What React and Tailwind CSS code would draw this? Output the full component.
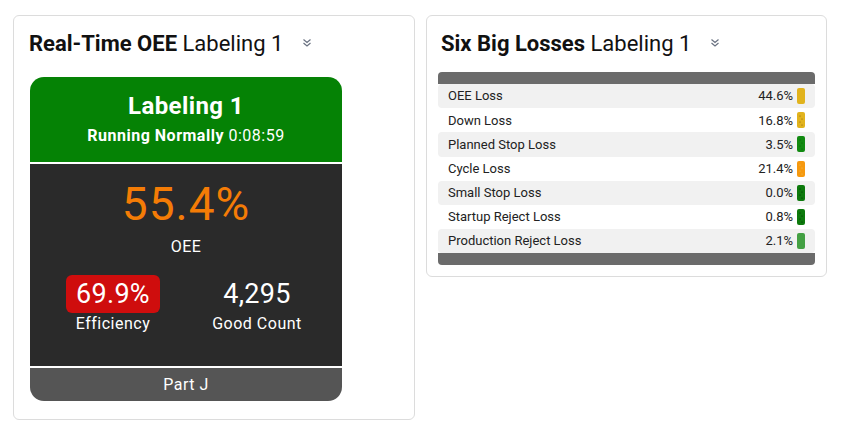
import React from 'react';

const losses = [
  { name: 'OEE Loss', value: '44.6%', color: 'bg-[#e1b31d]', dots: null },
  { name: 'Down Loss', value: '16.8%', color: 'bg-[#e1b31d]', dots: '#8a5a10' },
  { name: 'Planned Stop Loss', value: '3.5%', color: 'bg-[#118a11]', dots: '#0a5a0a' },
  { name: 'Cycle Loss', value: '21.4%', color: 'bg-[#f6990f]', dots: '#e9c25a' },
  { name: 'Small Stop Loss', value: '0.0%', color: 'bg-[#0d7a0d]', dots: '#032a03' },
  { name: 'Startup Reject Loss', value: '0.8%', color: 'bg-[#0d7a0d]', dots: '#032a03' },
  { name: 'Production Reject Loss', value: '2.1%', color: 'bg-[#43a043]', dots: null },
];

const Chevrons = () => (
  <svg width="10" height="10" viewBox="0 0 10 10" className="text-gray-500">
    <path d="M1.5 1.5 L5 4.5 L8.5 1.5 M1.5 5 L5 8 L8.5 5" fill="none" stroke="currentColor" strokeWidth="1.2" />
  </svg>
);

const Indicator = ({ color, dots }) => (
  <div className={`relative w-[8px] h-[16px] rounded-[2px] ${color} overflow-hidden`}>
    {dots && (
      <svg width="8" height="16" className="absolute inset-0">
        <circle cx="3" cy="4" r="0.6" fill={dots} />
        <circle cx="5" cy="7" r="0.6" fill={dots} />
        <circle cx="3" cy="10" r="0.6" fill={dots} />
        <circle cx="5" cy="13" r="0.6" fill={dots} />
      </svg>
    )}
  </div>
);

const OeeCard = () => (
  <div className="w-[402px] h-[405px] border border-[#dcdcdc] rounded-[6px] bg-white px-[15px] pt-[14px]">
    <div className="flex items-center h-[27px]">
      <h2 className="text-[22px] leading-[27px] text-[#111]">
        <span className="font-bold">Real-Time OEE</span> Labeling 1
      </h2>
      <span className="ml-[19px] mt-[-2px]"><Chevrons /></span>
    </div>
    <div className="mt-[20px] w-[312px] text-white ml-[1px]">
      <div className="bg-[#058205] rounded-t-[14px] h-[85px] flex flex-col items-center pt-[14px]">
        <div className="text-[24px] font-bold leading-[30px] tracking-[0.4px]">Labeling 1</div>
        <div className="text-[16px] leading-[20px] mt-[5px] tracking-[0.5px]">
          <span className="font-bold">Running Normally</span> 0:08:59
        </div>
      </div>
      <div className="h-[2px] bg-white" />
      <div className="bg-[#2a2a2a] h-[202px] flex flex-col items-center pt-[14px]">
        <div className="text-[46px] leading-[52px] text-[#f47c06] tracking-[1px]">55.4%</div>
        <div className="text-[16px] leading-[20px] mt-[7px] tracking-[0.5px]">OEE</div>
        <div className="flex w-full mt-[18px]">
          <div className="w-[166px] flex flex-col items-center">
            <div className="bg-[#cf0d0d] rounded-[6px] px-[10px] h-[38px] flex items-center text-[27px] tracking-[0.3px]">69.9%</div>
            <div className="text-[16px] leading-[20px] mt-[1px] tracking-[0.5px]">Efficiency</div>
          </div>
          <div className="w-[122px] flex flex-col items-center">
            <div className="h-[38px] flex items-center text-[27px] tracking-[0.3px]">4,295</div>
            <div className="text-[16px] leading-[20px] mt-[1px] tracking-[0.5px]">Good Count</div>
          </div>
        </div>
      </div>
      <div className="h-[2px] bg-white" />
      <div className="bg-[#555555] rounded-b-[14px] h-[33px] flex items-center justify-center text-[16px] tracking-[0.5px]">Part J</div>
    </div>
  </div>
);

const LossesCard = () => (
  <div className="w-[401px] h-[262px] border border-[#dcdcdc] rounded-[6px] bg-white px-[11px] pt-[14px]">
    <div className="flex items-center h-[27px] pl-[3px]">
      <h2 className="text-[22px] leading-[27px] text-[#111]">
        <span className="font-bold">Six Big Losses</span> Labeling 1
      </h2>
      <span className="ml-[19px] mt-[-2px]"><Chevrons /></span>
    </div>
    <div className="mt-[15px] w-[377px]">
      <div className="h-[12px] bg-[#6b6b6b] rounded-t-[4px]" />
      {losses.map((l, i) => (
        <div key={l.name} className={`h-[24.2px] flex items-center pl-[10px] pr-[10px] text-[13px] text-[#222] rounded-[4px] ${i % 2 === 0 ? 'bg-[#f1f1f1]' : 'bg-white'}`}>
          <span className="flex-1">{l.name}</span>
          <span className="mr-[4px]">{l.value}</span>
          <Indicator color={l.color} dots={l.dots} />
        </div>
      ))}
      <div className="h-[12px] bg-[#6b6b6b] rounded-b-[4px]" />
    </div>
  </div>
);

export default function App() {
  return (
    <div className="w-[850px] h-[442px] bg-white pl-[13px] pt-[15px] flex items-start gap-[11px]" style={{ fontFamily: 'Roboto, "Liberation Sans", sans-serif' }}>
      <OeeCard />
      <LossesCard />
    </div>
  );
}
